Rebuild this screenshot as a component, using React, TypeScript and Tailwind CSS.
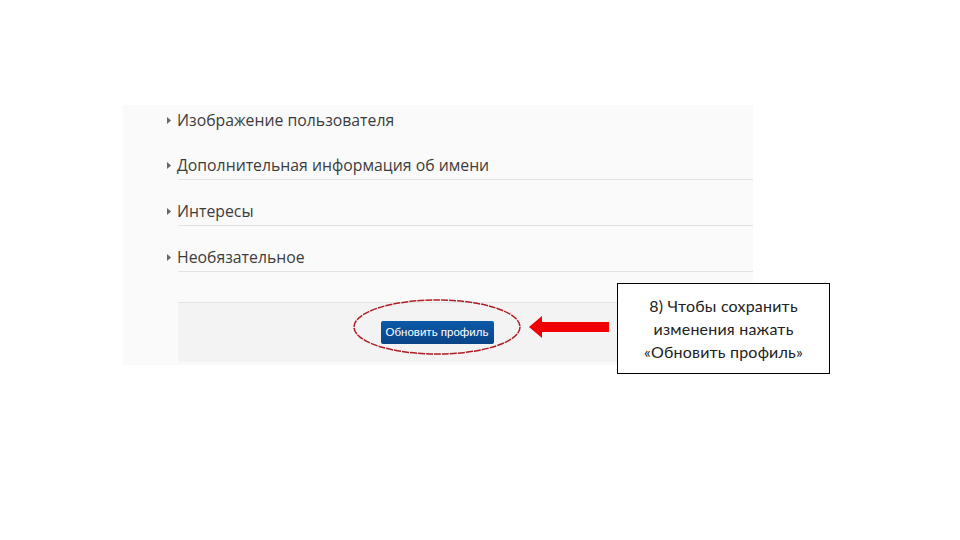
import React from "react";

function Caret() {
  return (
    <svg className="w-[4px] h-[7px] shrink-0" viewBox="0 0 4 7">
      <path d="M0 0 L4 3.5 L0 7 Z" fill="#666" />
    </svg>
  );
}

function Section({ title, first }: { title: string; first?: boolean }) {
  return (
    <div
      className={
        first
          ? "h-[29px] pt-[4px] flex"
          : "h-[46px] pt-[20px] flex border-b border-[#e3e3e3]"
      }
    >
      <div className="flex items-center gap-[6px] -ml-[11px] h-[22px]">
        <Caret />
        <span className="text-[15.8px] leading-[22px] text-[#3d3d3d]">{title}</span>
      </div>
    </div>
  );
}

export default function App() {
  return (
    <div
      className="relative w-[960px] h-[540px] bg-white overflow-hidden"
      style={{ fontFamily: "'Open Sans', 'Noto Sans', sans-serif" }}
    >
      {/* screenshot of the form */}
      <div className="pt-[105px] pl-[123px]">
        <div className="w-[630px] h-[260px] bg-[#fafafa] pl-[55px] flex flex-col">
          <Section title="Изображение пользователя" first />
          <Section title="Дополнительная информация об имени" />
          <Section title="Интересы" />
          <Section title="Необязательное" />
          <div className="h-[30px]" />
          <div className="h-[60px] bg-[#f3f3f3] border-t border-[#e3e3e3] flex items-center justify-center pr-[57px]">
            <button
              className="h-[23px] w-[113px] rounded-[2px] bg-gradient-to-b from-[#0b5aa8] to-[#0a4387] text-white text-[11.5px] leading-none"
              style={{ fontFamily: "'Liberation Sans', Arial, sans-serif" }}
            >
              Обновить профиль
            </button>
          </div>
        </div>
      </div>

      {/* annotation: ellipse + arrow */}
      <svg className="absolute left-0 top-0" width="960" height="540" viewBox="0 0 960 540">
        <ellipse
          cx="437"
          cy="327"
          rx="83"
          ry="27"
          fill="none"
          stroke="#b01e23"
          strokeWidth="1.5"
          strokeDasharray="7 1"
        />
        <path d="M529 327 L542 316 L542 322 L609 322 L609 332 L542 332 L542 338 Z" fill="#f00000" />
      </svg>

      {/* annotation: callout */}
      <div
        className="absolute left-[617px] top-[283px] w-[213px] h-[91px] border border-black bg-white flex flex-col items-center justify-center text-[16px] leading-[23px] text-[#222] tracking-[0.2px]"
        style={{ fontFamily: "Lato, 'Noto Sans', sans-serif" }}
      >
        <span>8) Чтобы сохранить</span>
        <span>изменения нажать</span>
        <span>«Обновить профиль»</span>
      </div>
    </div>
  );
}
